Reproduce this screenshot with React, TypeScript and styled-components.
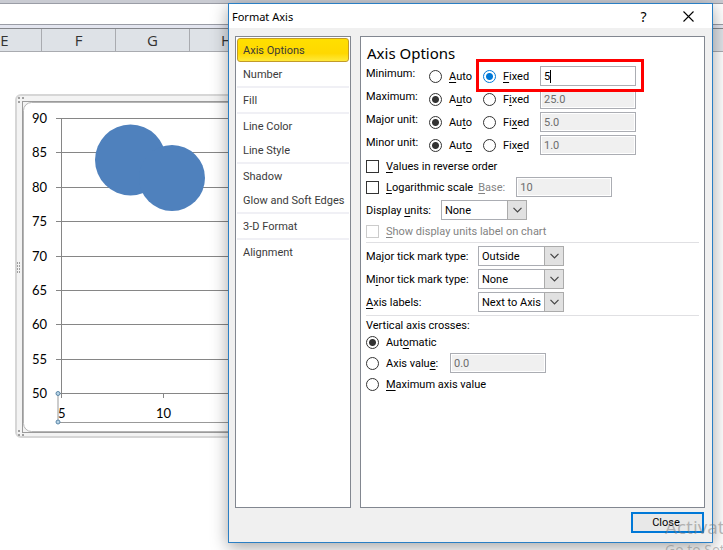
import React from 'react';
import styled, { createGlobalStyle } from 'styled-components';

const GlobalStyle = createGlobalStyle`
  * { box-sizing: border-box; }
  body {
    margin: 0;
    background: #fff;
    color: #000;
    font-family: Roboto, 'Noto Sans', sans-serif;
    font-size: 11px;
  }
  input, select, button { font: inherit; color: inherit; margin: 0; }
  u { text-underline-offset: 2px; }
`;

const Desktop = styled.main`
  position: relative;
  min-height: 100vh;
  overflow: hidden;
`;

const RibbonEdge = styled.div`
  height: 3px;
  background: #c9cbd2;
`;

const FormulaBar = styled.div`
  height: 22px;
  border: solid #9a9da6;
  border-width: 1px 0;
  background: #fff;
`;

const HeaderGap = styled.div`
  height: 3px;
  background: #e4e6f0;
`;

const ColumnHeaders = styled.div`
  display: flex;
  height: 24px;
  margin-left: -32px;
  border-top: 1px solid #85878c;
  border-bottom: 1px solid #a9abb0;
  background: #dee2e7;
`;

const ColumnHeader = styled.div`
  flex: none;
  width: 74px;
  border-right: 1px solid #a9abb0;
  color: #333;
  font-family: 'Open Sans', sans-serif;
  font-size: 15px;
  line-height: 23px;
  text-align: center;
`;

const ChartDrawing = styled.svg`
  display: block;
  margin: 42px 0 0 15px;
  font-family: Lato, sans-serif;
  font-size: 13px;
`;

const Dialog = styled.section`
  position: absolute;
  inset: 3px 10px 7px 228px;
  display: flex;
  flex-direction: column;
  border: 1px solid #2a7fc4;
  background: #f0f0f0;
  box-shadow: 0 4px 16px rgba(0, 0, 0, 0.36);
`;

const TitleBar = styled.header`
  display: flex;
  align-items: center;
  height: 24px;
  padding: 0 18px 0 3px;
  background: #fff;
`;

const Title = styled.h1`
  flex: 1;
  margin: 0;
  font-family: 'Noto Sans', sans-serif;
  font-size: 11px;
  font-weight: 400;
`;

const TitleButton = styled.button`
  display: flex;
  align-items: center;
  justify-content: center;
  width: 45px;
  height: 24px;
  padding: 0;
  border: 0;
  background: none;
  font-family: 'Noto Sans', sans-serif;
  font-size: 14px;
  &:last-child { width: 12px; margin-left: 16px; }
`;

const Body = styled.div`
  flex: 1;
  display: flex;
  gap: 9px;
  padding: 8px 7px 0 6px;
`;

const Nav = styled.nav`
  flex: none;
  width: 116px;
  padding: 1px;
  border: 1px solid #828790;
  background: #fff;
`;

const NavGroup = styled.div`
  & + & { border-top: 2px solid #f0f0f5; }
`;

const NavItem = styled.button<{ $active?: boolean }>`
  display: block;
  width: 100%;
  height: 24px;
  padding: 0 5px;
  border: 1px solid ${(p) => (p.$active ? '#c29b29' : 'transparent')};
  border-radius: 3px;
  background: ${(p) => (p.$active ? 'linear-gradient(#ffdf00, #ffd800 65%, #ffe93a)' : 'none')};
  color: #3b3b3b;
  text-align: left;
  white-space: nowrap;
`;

const Panel = styled.div`
  flex: 1;
  padding: 4px 5px;
  border: 1px solid #828790;
  background: #fff;
`;

const Heading = styled.h2`
  margin: 0 0 1px 1px;
  font-family: 'Noto Sans', sans-serif;
  font-size: 15px;
  font-weight: 400;
  line-height: 24px;
`;

const Stack = styled.div<{ $gap: number; $top?: number }>`
  display: flex;
  flex-direction: column;
  gap: ${(p) => p.$gap}px;
  margin-top: ${(p) => p.$top ?? 0}px;
`;

const ScaleList = styled(Stack)`
  position: relative;
`;

const ScaleRow = styled.div`
  display: grid;
  grid-template-columns: 63px 54px 57px 96px;
  align-items: center;
  height: 20px;
`;

const RowName = styled.span`
  align-self: start;
  line-height: 15px;
`;

const Row = styled.div<{ $h?: number }>`
  display: flex;
  align-items: center;
  height: ${(p) => p.$h ?? 20}px;
`;

const Choice = styled.label<{ $off?: boolean }>`
  display: flex;
  align-items: center;
  gap: 7px;
  white-space: nowrap;
  color: ${(p) => (p.$off ? '#838383' : '#000')};
`;

const Radio = styled.input.attrs({ type: 'radio' })<{ $accent?: boolean }>`
  appearance: none;
  flex: none;
  width: 13px;
  height: 13px;
  border: 1px solid ${(p) => (p.$accent ? '#0078d7' : '#333')};
  border-radius: 50%;
  background: #fff;
  &:checked {
    background: radial-gradient(circle, ${(p) => (p.$accent ? '#0078d7' : '#333')} 3px, #fff 4px);
  }
`;

const Check = styled.input.attrs({ type: 'checkbox' })`
  appearance: none;
  flex: none;
  width: 13px;
  height: 13px;
  border: 1px solid #333;
  background: #fff;
  &:disabled { border-color: #ccc; }
`;

const TextBox = styled.input.attrs({ type: 'text' })`
  width: 96px;
  height: 20px;
  padding: 0 3px;
  border: 1px solid #abadb3;
  background: #fff;
  &:disabled {
    background: #f0f0f0;
    box-shadow: inset 0 0 0 1px #fff;
    color: #6d6d6d;
  }
`;

const BoxWrap = styled.div`
  position: relative;
  display: flex;
`;

const Caret = styled.span`
  position: absolute;
  left: 10px;
  top: 4px;
  width: 1px;
  height: 13px;
  background: #000;
`;

const Callout = styled.div`
  position: absolute;
  left: 110px;
  top: -7px;
  width: 168px;
  height: 33px;
  border: 3px solid #f00;
  pointer-events: none;
`;

const FieldLabel = styled.label<{ $w?: number; $off?: boolean }>`
  width: ${(p) => (p.$w ? `${p.$w}px` : 'auto')};
  color: ${(p) => (p.$off ? '#838383' : '#000')};
  white-space: nowrap;
`;

const BaseField = styled.div`
  display: flex;
  align-items: center;
  gap: 11px;
  margin-left: 5px;
`;

const Divider = styled.hr<{ $top: number; $bottom: number }>`
  height: 1px;
  margin: ${(p) => p.$top}px 0 ${(p) => p.$bottom}px;
  border: 0;
  background: #e0e0e3;
`;

const SelectWrap = styled.div`
  position: relative;
  width: 86px;
  height: 20px;
`;

const NativeSelect = styled.select`
  appearance: none;
  display: block;
  width: 100%;
  height: 20px;
  padding: 0 0 0 3px;
  border: 1px solid #abadb3;
  border-radius: 0;
  background: #fff;
`;

const Arrow = styled.span`
  position: absolute;
  inset: 0 0 0 auto;
  display: flex;
  align-items: center;
  justify-content: center;
  width: 20px;
  border: 1px solid #ababab;
  background: #e1e1e1;
  pointer-events: none;
`;

const Legend = styled.div`
  line-height: 16px;
`;

const Footer = styled.footer`
  display: flex;
  justify-content: flex-end;
  padding: 4px 8px 9px;
`;

const CloseButton = styled.button`
  width: 73px;
  height: 21px;
  padding: 0 3px 0 0;
  border: 2px solid #0078d7;
  background: #e8e8e8;
`;

const Watermark = styled.div`
  position: absolute;
  left: 665px;
  top: 515px;
  color: rgba(120, 120, 120, 0.5);
  font-family: 'Open Sans', sans-serif;
  white-space: nowrap;
  pointer-events: none;
`;

const WatermarkTitle = styled.div`
  font-size: 19px;
  line-height: 25px;
`;

const WatermarkText = styled.div`
  font-size: 14px;
  line-height: 20px;
`;

function Key({ text, at }: { text: string; at: number }) {
  return (
    <span>
      {text.slice(0, at)}
      <u>{text[at]}</u>
      {text.slice(at + 1)}
    </span>
  );
}

function DropDown({ id, value, options }: { id: string; value: string; options: string[] }) {
  return (
    <SelectWrap>
      <NativeSelect id={id} defaultValue={value}>
        {options.map((o) => (
          <option key={o}>{o}</option>
        ))}
      </NativeSelect>
      <Arrow>
        <svg width="9" height="6" viewBox="0 0 9 6" fill="none" stroke="#444" strokeWidth="1.2">
          <path d="M.5 .8 4.5 4.8 8.5 .8" />
        </svg>
      </Arrow>
    </SelectWrap>
  );
}

const yTicks = [90, 85, 80, 75, 70, 65, 60, 55, 50];
const gripOffsets = [[19, 98], [23, 98], [19, 102]];

function BubbleChart() {
  return (
    <ChartDrawing width="480" height="345" viewBox="15 94 480 345">
      <rect x="16" y="95" width="478" height="342" rx="5" fill="#f3f3f3" stroke="#d6d6d6" strokeWidth="2" />
      <rect x="22.5" y="101.5" width="465" height="331" fill="#f3f3f3" stroke="#9b9b9b" />
      <rect x="23.5" y="102.5" width="463" height="329" rx="8" fill="#fff" stroke="#b5b5b5" />
      <g fill="#a0a0a0">
        {gripOffsets.map(([x, y]) => (
          <React.Fragment key={`${x}-${y}`}>
            <rect x={x - 1} y={y - 1} width="2" height="2" />
            <rect x={x - 1} y={532 - y} width="2" height="2" />
          </React.Fragment>
        ))}
        {[262, 265, 268, 271].map((y) => (
          <React.Fragment key={y}>
            <rect x="17" y={y} width="1" height="2" />
            <rect x="19" y={y} width="1" height="2" />
          </React.Fragment>
        ))}
      </g>
      {yTicks.map((v, i) => {
        const y = Math.round(118 + i * 34.4) + 0.5;
        return (
          <g key={v}>
            <path d={`M56 ${y}H480`} stroke="#868686" />
            <text x="32" y={y + 4.5}>{v}</text>
          </g>
        );
      })}
      <path d="M61.5 118V398M163.5 393V398" stroke="#868686" fill="none" />
      <path d="M480 422.5H58V393.5" stroke="#999" fill="none" />
      <circle cx="58" cy="393.5" r="2" fill="#b7d3e6" stroke="#5b87a8" />
      <circle cx="58" cy="422" r="2" fill="#b7d3e6" stroke="#5b87a8" />
      <text x="58" y="418">5</text>
      <text x="156" y="418">10</text>
      <circle cx="130.5" cy="160" r="35.5" fill="#4f81bd" />
      <circle cx="172" cy="178" r="33" fill="#4f81bd" />
    </ChartDrawing>
  );
}

const navGroups = [
  ['Axis Options', 'Number'],
  ['Fill'],
  ['Line Color', 'Line Style'],
  ['Shadow', 'Glow and Soft Edges'],
  ['3-D Format'],
  ['Alignment'],
];

const scaleRows = [
  { name: 'Minimum:', autoKey: 0, fixedKey: 0, value: '5', fixed: true },
  { name: 'Maximum:', autoKey: 1, fixedKey: 1, value: '25.0', fixed: false },
  { name: 'Major unit:', autoKey: 2, fixedKey: 2, value: '5.0', fixed: false },
  { name: 'Minor unit:', autoKey: 3, fixedKey: 3, value: '1.0', fixed: false },
];

export default function App() {
  return (
    <Desktop>
      <GlobalStyle />
      <RibbonEdge />
      <FormulaBar />
      <HeaderGap />
      <ColumnHeaders>
        {['E', 'F', 'G', 'H'].map((c) => (
          <ColumnHeader key={c}>{c}</ColumnHeader>
        ))}
      </ColumnHeaders>
      <BubbleChart />

      <Dialog role="dialog" aria-label="Format Axis">
        <TitleBar>
          <Title>Format Axis</Title>
          <TitleButton>?</TitleButton>
          <TitleButton aria-label="Close window">
            <svg width="11" height="11" viewBox="0 0 11 11" stroke="#000" strokeWidth="1.1">
              <path d="M.5 .5 10.5 10.5M10.5 .5 .5 10.5" />
            </svg>
          </TitleButton>
        </TitleBar>
        <Body>
          <Nav>
            {navGroups.map((group) => (
              <NavGroup key={group[0]}>
                {group.map((item) => (
                  <NavItem key={item} $active={item === 'Axis Options'}>{item}</NavItem>
                ))}
              </NavGroup>
            ))}
          </Nav>
          <Panel>
            <Heading>Axis Options</Heading>
            <ScaleList $gap={3}>
              {scaleRows.map((r) => (
                <ScaleRow key={r.name}>
                  <RowName>{r.name}</RowName>
                  <Choice>
                    <Radio name={r.name} defaultChecked={!r.fixed} />
                    <Key text="Auto" at={r.autoKey} />
                  </Choice>
                  <Choice>
                    <Radio name={r.name} defaultChecked={r.fixed} $accent={r.fixed} />
                    <Key text="Fixed" at={r.fixedKey} />
                  </Choice>
                  <BoxWrap>
                    <TextBox aria-label={r.name} defaultValue={r.value} disabled={!r.fixed} />
                    {r.fixed && <Caret />}
                  </BoxWrap>
                </ScaleRow>
              ))}
              <Callout />
            </ScaleList>
            <Stack $gap={1} $top={1}>
              <Row>
                <Choice><Check /><Key text="Values in reverse order" at={0} /></Choice>
              </Row>
              <Row>
                <Choice><Check /><Key text="Logarithmic scale" at={0} /></Choice>
                <BaseField>
                  <FieldLabel htmlFor="base" $off><Key text="Base:" at={0} /></FieldLabel>
                  <TextBox id="base" defaultValue="10" disabled />
                </BaseField>
              </Row>
            </Stack>
            <Stack $gap={1} $top={3}>
              <Row>
                <FieldLabel htmlFor="units" $w={75}><Key text="Display units:" at={8} /></FieldLabel>
                <DropDown id="units" value="None" options={['None', 'Hundreds', 'Thousands', 'Millions']} />
              </Row>
              <Row>
                <Choice $off><Check disabled /><Key text="Show display units label on chart" at={0} /></Choice>
              </Row>
            </Stack>
            <Divider $top={1} $bottom={3} />
            <Stack $gap={3}>
              <Row>
                <FieldLabel htmlFor="major" $w={112}><Key text="Major tick mark type:" at={2} /></FieldLabel>
                <DropDown id="major" value="Outside" options={['None', 'Inside', 'Outside', 'Cross']} />
              </Row>
              <Row>
                <FieldLabel htmlFor="minor" $w={112}><Key text="Minor tick mark type:" at={1} /></FieldLabel>
                <DropDown id="minor" value="None" options={['None', 'Inside', 'Outside', 'Cross']} />
              </Row>
              <Row>
                <FieldLabel htmlFor="labels" $w={112}><Key text="Axis labels:" at={0} /></FieldLabel>
                <DropDown id="labels" value="Next to Axis" options={['Next to Axis', 'High', 'Low', 'None']} />
              </Row>
            </Stack>
            <Divider $top={3} $bottom={2} />
            <Legend>Vertical axis crosses:</Legend>
            <Stack $gap={5}>
              <Row $h={16}>
                <Choice><Radio name="crosses" defaultChecked /><Key text="Automatic" at={3} /></Choice>
              </Row>
              <Row $h={16}>
                <FieldLabel as="div" $w={84}>
                  <Choice><Radio name="crosses" /><Key text="Axis value:" at={9} /></Choice>
                </FieldLabel>
                <TextBox aria-label="Axis value" defaultValue="0.0" disabled />
              </Row>
              <Row $h={16}>
                <Choice><Radio name="crosses" /><Key text="Maximum axis value" at={0} /></Choice>
              </Row>
            </Stack>
          </Panel>
        </Body>
        <Footer>
          <CloseButton>Close</CloseButton>
        </Footer>
      </Dialog>

      <Watermark aria-hidden="true">
        <WatermarkTitle>Activate Windows</WatermarkTitle>
        <WatermarkText>Go to Settings to activate Windows.</WatermarkText>
      </Watermark>
    </Desktop>
  );
}
